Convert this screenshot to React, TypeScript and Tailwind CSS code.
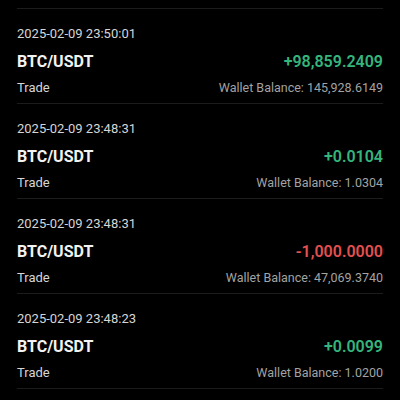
const ROWS = [
  { time: "2025-02-09 23:50:01", amount: "+98,859.2409", balance: "145,928.6149", up: true },
  { time: "2025-02-09 23:48:31", amount: "+0.0104", balance: "1.0304", up: true },
  { time: "2025-02-09 23:48:31", amount: "-1,000.0000", balance: "47,069.3740", up: false },
  { time: "2025-02-09 23:48:23", amount: "+0.0099", balance: "1.0200", up: true },
];

export default function App() {
  return (
    <div className="w-[400px] h-[400px] bg-black pt-2 overflow-hidden" style={{ fontFamily: "Roboto, 'Noto Sans', sans-serif" }}>
      <div className="mx-[17px] border-t border-[#1c1c1c]">
        {ROWS.map((r, i) => (
          <div key={i} className="h-[95px] border-b border-[#1c1c1c] flex flex-col pt-[17px]">
            <div className="text-[13px] leading-[16px] text-[#d6d6d6]">{r.time}</div>
            <div className="flex items-center justify-between mt-[10px] h-[20px]">
              <span className="text-[16px] font-bold text-[#f2f2f2]">BTC/USDT</span>
              <span className={`text-[16px] font-semibold ${r.up ? "text-[#35b57c]" : "text-[#e3504f]"}`}>{r.amount}</span>
            </div>
            <div className="flex items-center justify-between mt-[8px] leading-[16px]">
              <span className="text-[13px] text-[#d6d6d6]">Trade</span>
              <span className="text-[12.5px] text-[#a3a3a3]">Wallet Balance: {r.balance}</span>
            </div>
          </div>
        ))}
      </div>
    </div>
  );
}
